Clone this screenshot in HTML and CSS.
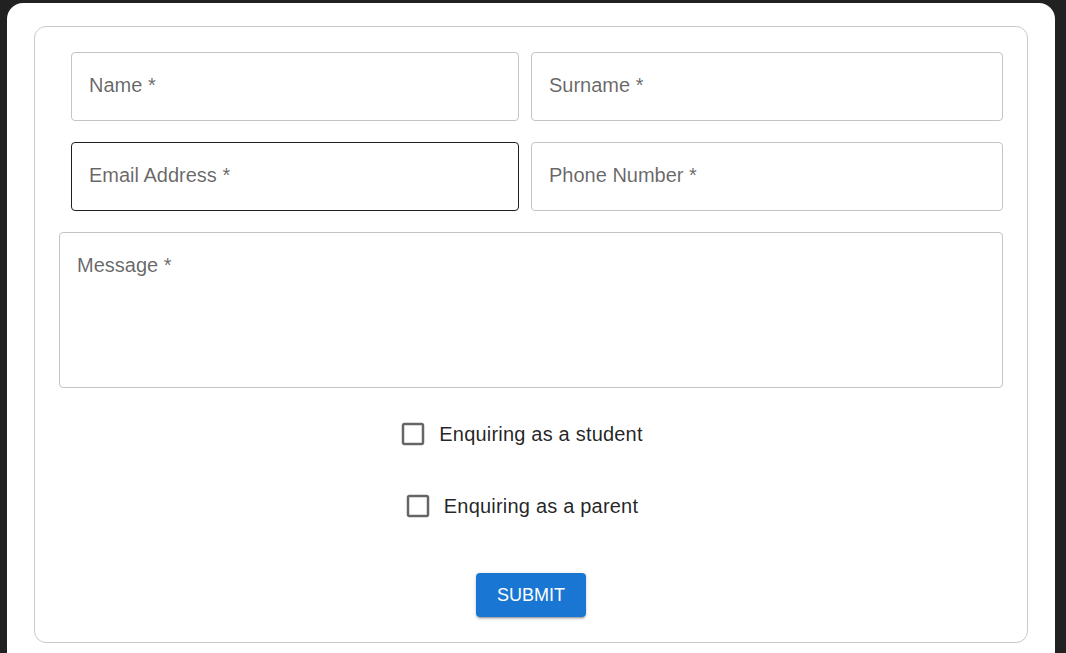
FILE: index.html
```html
<!DOCTYPE html>
<html lang="en">
<head>
<meta charset="utf-8">
<title>Contact form</title>
<link rel="stylesheet" href="styles.css">
</head>
<body>
<div class="panel">
  <form class="card">
    <div class="row">
      <label class="field"><span class="label">Name *</span></label>
      <label class="field"><span class="label">Surname *</span></label>
    </div>
    <div class="row">
      <label class="field field-focused"><span class="label">Email Address *</span></label>
      <label class="field"><span class="label">Phone Number *</span></label>
    </div>
    <label class="field field-message"><span class="label">Message *</span></label>
    <div class="checks">
      <label class="check">
        <svg class="box" viewBox="0 0 24 24"><path d="M19 5v14H5V5h14m0-2H5c-1.1 0-2 .9-2 2v14c0 1.1.9 2 2 2h14c1.1 0 2-.9 2-2V5c0-1.1-.9-2-2-2z"/></svg>
        <span class="check-text">Enquiring as a student</span>
      </label>
      <label class="check">
        <svg class="box" viewBox="0 0 24 24"><path d="M19 5v14H5V5h14m0-2H5c-1.1 0-2 .9-2 2v14c0 1.1.9 2 2 2h14c1.1 0 2-.9 2-2V5c0-1.1-.9-2-2-2z"/></svg>
        <span class="check-text">Enquiring as a parent</span>
      </label>
    </div>
    <div class="actions">
      <button type="button" class="submit">SUBMIT</button>
    </div>
  </form>
</div>
</body>
</html>
```

FILE: styles.css
```css
html, body {
  margin: 0;
  padding: 0;
  height: 100%;
  overflow: hidden;
}

body {
  background: #212121;
  font-family: "Liberation Sans", Arial, sans-serif;
}

.panel {
  margin: 3px 11px 0 7px;
  background: #ffffff;
  border-radius: 16px;
  padding: 23px 27px 40px 27px;
}

.card {
  border: 1px solid #cacaca;
  border-radius: 12px;
  padding: 25px 24px 25px 24px;
  display: flex;
  flex-direction: column;
}

.row {
  display: grid;
  grid-template-columns: 448px 1fr;
  column-gap: 12px;
  margin-left: 12px;
  margin-bottom: 21px;
}

.field {
  display: block;
  box-sizing: border-box;
  height: 69px;
  border: 1px solid #c4c4c4;
  border-radius: 4px;
  padding: 20px 17px 0 17px;
}

.field-focused {
  border-color: #1f1f1f;
}

.field-message {
  height: 156px;
}

.label {
  display: block;
  font-size: 20px;
  line-height: 24px;
  color: rgba(0, 0, 0, 0.6);
}

.checks {
  display: flex;
  flex-direction: column;
  align-items: center;
  gap: 20px;
  margin-top: 20px;
}

.check {
  display: flex;
  align-items: center;
  height: 52px;
  margin-right: 21px;
}

.box {
  width: 30px;
  height: 30px;
  fill: rgba(0, 0, 0, 0.6);
  margin-right: 11px;
}

.check-text {
  font-size: 20px;
  line-height: 24px;
  letter-spacing: 0.2px;
  color: rgba(0, 0, 0, 0.87);
}

.actions {
  display: flex;
  justify-content: center;
  margin-top: 41px;
}

.submit {
  width: 110px;
  height: 44px;
  border: none;
  border-radius: 4px;
  background: #1976d2;
  color: #ffffff;
  font-family: "Liberation Sans", Arial, sans-serif;
  font-size: 18px;
  padding: 0;
  box-shadow: 0 3px 1px -2px rgba(0,0,0,0.2), 0 2px 2px 0 rgba(0,0,0,0.14), 0 1px 5px 0 rgba(0,0,0,0.12);
}
```
